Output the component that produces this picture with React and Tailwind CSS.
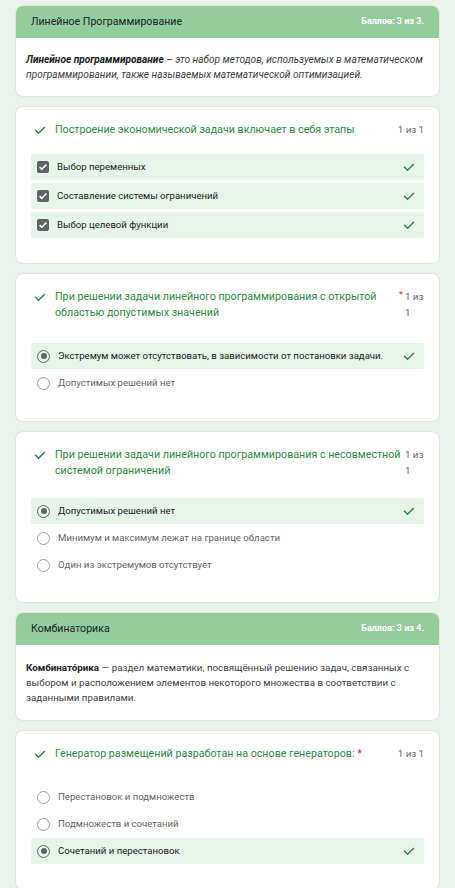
import React from "react";

const Check = ({ className = "" }) => (
  <svg viewBox="0 0 24 24" className={className} fill="none" stroke="currentColor" strokeWidth="2.4" strokeLinecap="square">
    <path d="M4.5 12.5l5 5 10-10" />
  </svg>
);

const CheckBox = () => (
  <span className="w-[12px] h-[12px] rounded-[2px] bg-[#5f6368] flex items-center justify-center shrink-0">
    <svg viewBox="0 0 24 24" className="w-[10px] h-[10px]" fill="none" stroke="white" strokeWidth="4">
      <path d="M4 12.5l5 5 11-11" />
    </svg>
  </span>
);

const Radio = ({ checked }) => (
  <span
    className={`w-[13px] h-[13px] rounded-full border flex items-center justify-center shrink-0 ${
      checked ? "border-[#5f6368]" : "border-[#9aa0a6]"
    }`}
  >
    {checked && <span className="w-[6px] h-[6px] rounded-full bg-[#5f6368]" />}
  </span>
);

const SectionHeader = ({ title, score }) => (
  <div className="bg-[#93cd9b] h-[32px] rounded-t-[7px] flex items-center justify-between pl-[15px] pr-[15px]">
    <span className="text-[10.6px] text-[#202124]">{title}</span>
    <span className="text-[9px] font-bold text-white">{score}</span>
  </div>
);

const Option = ({ kind, checked, correct, text }) => (
  <div
    className={`flex items-center h-[26px] pl-[6px] pr-[8px] rounded-[2px] ${
      correct ? "bg-[#e6f4ea]" : ""
    }`}
  >
    {kind === "box" ? <CheckBox /> : <Radio checked={checked} />}
    <span className={`ml-[8px] flex-1 text-[9.6px] ${checked ? "text-[#202124]" : "text-[#5f6368]"}`}>
      {text}
    </span>
    {correct && <Check className="w-[14px] h-[14px] text-[#1e8e3e]" />}
  </div>
);

const Question = ({ title, points, required, star, wrap, kind, options, gapClass, padClass = "pb-[25px]" }) => (
  <div className={`bg-white rounded-[8px] border border-[#dfe6e0] pt-[15px] px-[15px] ${padClass}`}>
    <div className="flex items-start">
      <Check className="w-[14px] h-[14px] text-[#1e8e3e] mt-[1px] ml-[2px] shrink-0" />
      <div className="ml-[8px] flex-1 text-[10.7px] leading-[16px] text-[#2a8a45]">
        {title}
        {star && <span className="text-[#d93025]"> *</span>}
      </div>
      {wrap ? (
        <div className="relative w-[19px] ml-[2px] shrink-0 text-[9.7px] leading-[16px] text-[#5f6368]">
          {required && <span className="absolute -left-[6px] -top-[2px] text-[#d93025] text-[9px]">*</span>}
          {points}
        </div>
      ) : (
        <div className="ml-[8px] shrink-0 whitespace-nowrap text-[9.7px] leading-[16px] text-[#5f6368]">{points}</div>
      )}
    </div>
    <div className={`flex flex-col ${kind === "box" ? "gap-[3px]" : "gap-[1px]"} ${gapClass}`}>
      {options.map((o, i) => (
        <Option key={i} kind={kind} {...o} />
      ))}
    </div>
  </div>
);

export default function App() {
  return (
    <div className="min-h-[888px] bg-[#e9f3eb] pt-[5px] px-[15px] flex flex-col gap-[9px] font-['Roboto',sans-serif]">
      {/* Линейное программирование */}
      <div className="bg-white rounded-[8px] border border-[#dfe6e0]">
        <SectionHeader title="Линейное Программирование" score="Баллов: 3 из 3." />
        <p className="pl-[10px] pr-[6px] pt-[14px] pb-[14px] text-[10.1px] leading-[15px] italic text-[#3c4043]">
          <b className="text-[#202124]">Линейное программирование</b> – это набор методов, используемых в математическом
          программировании, также называемых математической оптимизацией.
        </p>
      </div>

      <Question
        title="Построение экономической задачи включает в себя этапы"
        points="1 из 1"
        kind="box"
        gapClass="mt-[16px]"
        options={[
          { text: "Выбор переменных", checked: true, correct: true },
          { text: "Составление системы ограничений", checked: true, correct: true },
          { text: "Выбор целевой функции", checked: true, correct: true },
        ]}
      />

      <Question
        title="При решении задачи линейного программирования с открытой областью допустимых значений"
        points="1 из 1"
        required
        wrap
        kind="radio"
        gapClass="mt-[22px]"
        options={[
          { text: "Экстремум может отсутствовать, в зависимости от постановки задачи.", checked: true, correct: true },
          { text: "Допустимых решений нет" },
        ]}
      />

      <Question
        title="При решении задачи линейного программирования с несовместной системой ограничений"
        points="1 из 1"
        wrap
        kind="radio"
        gapClass="mt-[19px]"
        padClass="pb-[24px]"
        options={[
          { text: "Допустимых решений нет", checked: true, correct: true },
          { text: "Минимум и максимум лежат на границе области" },
          { text: "Один из экстремумов отсутствует" },
        ]}
      />

      {/* Комбинаторика */}
      <div className="bg-white rounded-[8px] border border-[#dfe6e0]">
        <SectionHeader title="Комбинаторика" score="Баллов: 3 из 4." />
        <p className="px-[10px] pt-[15px] pb-[15px] text-[9.8px] leading-[15px] text-[#3c4043]">
          <b className="text-[#202124]">Комбинато́рика</b> — раздел математики, посвящённый решению задач, связанных с
          выбором и расположением элементов некоторого множества в соответствии с заданными правилами.
        </p>
      </div>

      <Question
        title="Генератор размещений разработан на основе генераторов:"
        star
        points="1 из 1"
        kind="radio"
        gapClass="mt-[22px]"
        options={[
          { text: "Перестановок и подмножеств" },
          { text: "Подмножеств и сочетаний" },
          { text: "Сочетаний и перестановок", checked: true, correct: true },
        ]}
      />
    </div>
  );
}
